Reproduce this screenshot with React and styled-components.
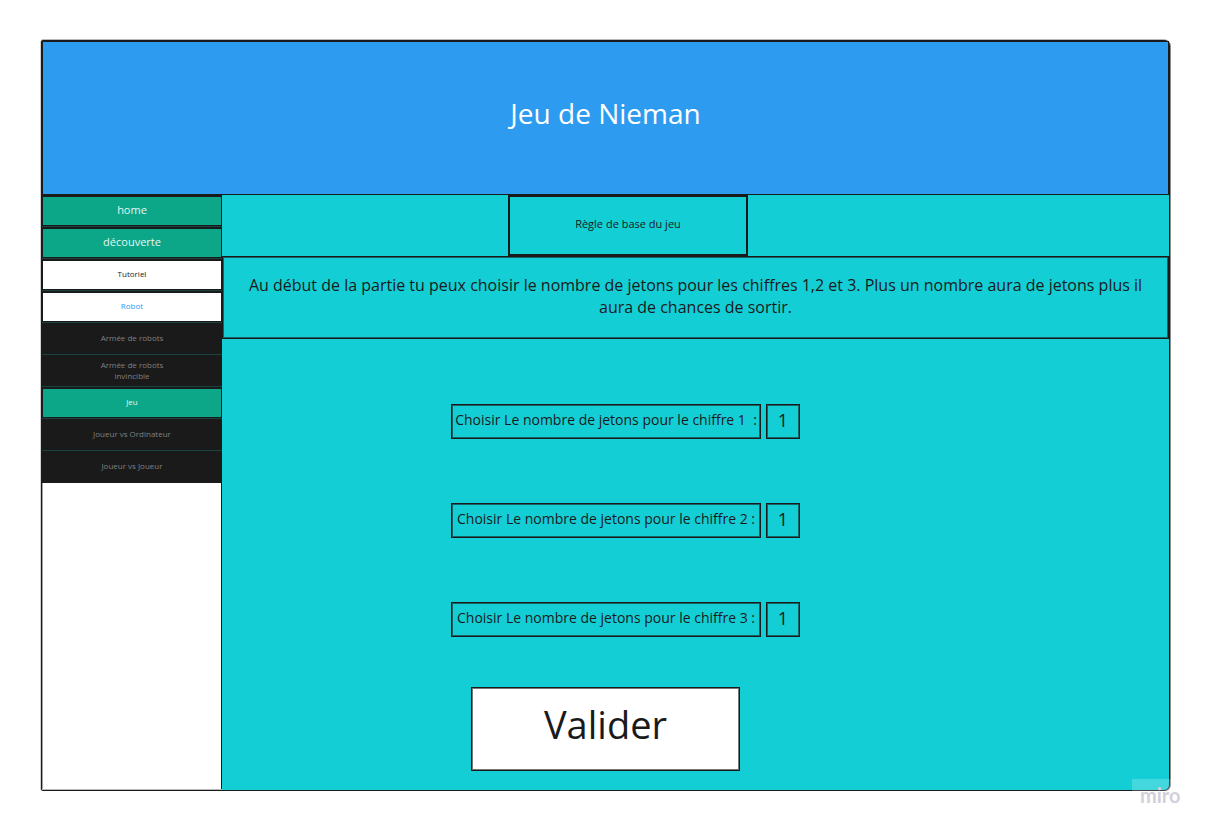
import React from "react";
import styled, { createGlobalStyle } from "styled-components";

const INK = "#1a1a1a";
const CYAN = "#14ced6";
const GREEN = "#0ca789";
const BLUE = "#2d9bf0";

const GlobalStyle = createGlobalStyle`
  *, *::before, *::after { box-sizing: border-box; }
  body {
    margin: 0;
    background: #ffffff;
    color: ${INK};
    font-family: "Open Sans", "Noto Sans", sans-serif;
  }
`;

const Page = styled.div`
  position: relative;
  display: flex;
  min-height: 100vh;
  padding: 40px 37px 37px 41px;
`;

const Frame = styled.div`
  flex: 1;
  display: flex;
  flex-direction: column;
  border: 1px solid ${INK};
  border-radius: 2px 6px 6px 2px;
  box-shadow: 1px 0 rgba(26, 26, 26, 0.5), -1px 0 rgba(26, 26, 26, 0.2),
    0 -1px rgba(26, 26, 26, 0.3);
  background: ${CYAN};
`;

const Header = styled.header`
  display: flex;
  justify-content: center;
  height: 154px;
  padding-top: 52px;
  border: 1px solid ${INK};
  background: ${BLUE};
`;

const Title = styled.h1`
  margin: 0;
  font-size: 28px;
  font-weight: 400;
  line-height: 38px;
  color: #ffffff;
`;

const Body = styled.div`
  flex: 1;
  display: grid;
  grid-template-columns: 180px 1fr;
`;

const Sidebar = styled.nav`
  display: flex;
  flex-direction: column;
  background: #ffffff;
  border-bottom: 1px solid rgba(26, 26, 26, 0.3);
  box-shadow: inset -1px 0 ${INK}, inset 1px 0 rgba(26, 26, 26, 0.4);
`;

const tones = {
  green: { background: GREEN, color: "#e6f5f2" },
  tutorial: { background: "#ffffff", color: INK },
  robot: { background: "#ffffff", color: BLUE },
  locked: { background: INK, color: "#808080" },
};

const NavItem = styled.a`
  display: flex;
  align-items: center;
  justify-content: center;
  height: 32px;
  padding: 0 48px 3px;
  border: solid ${INK};
  border-width: 2px 1px;
  background: ${(p) => tones[p.$tone].background};
  color: ${(p) => tones[p.$tone].color};
  font-size: ${(p) => (p.$large ? 11 : 8)}px;
  line-height: 11px;
  text-align: center;
  text-decoration: none;

  & + & {
    box-shadow: 0 -1px #194240;
  }

  &:last-child {
    box-shadow: 0 -1px #194240, 0 2px ${INK};
  }
`;

const Main = styled.main`
  display: flex;
  flex-direction: column;
`;

const box = `
  border: 1px solid ${INK};
  box-shadow: inset 0 0 0 1px rgba(26, 26, 26, 0.6);
`;

const RuleRow = styled.div`
  display: flex;
  justify-content: center;
  padding-right: 135px;
`;

const RuleTitle = styled.h2`
  width: 240px;
  height: 61px;
  margin: 0;
  padding-top: 19px;
  border: 2px solid ${INK};
  font-size: 11px;
  font-weight: 400;
  line-height: 16px;
  text-align: center;
`;

const Intro = styled.p`
  margin: 0;
  padding: 17px 12px 20px;
  ${box}
  font-size: 16px;
  line-height: 22px;
  text-align: center;
`;

const Form = styled.form`
  display: flex;
  flex-direction: column;
  padding: 65px 0 18px;
`;

const Fields = styled.div`
  display: flex;
  flex-direction: column;
  align-items: center;
  gap: 64px;
  padding-right: 140px;
`;

const Field = styled.div`
  display: flex;
  gap: 5px;
`;

const Label = styled.label`
  display: flex;
  justify-content: center;
  width: 310px;
  height: 35px;
  padding-top: 5px;
  ${box}
  font-size: 14px;
  line-height: 20px;
  white-space: pre;
`;

const NumberInput = styled.input`
  width: 34px;
  height: 35px;
  padding: 0 0 4px;
  ${box}
  border-radius: 0;
  background: transparent;
  color: ${INK};
  font-family: inherit;
  font-size: 18px;
  text-align: center;
`;

const Actions = styled.div`
  display: flex;
  justify-content: center;
  margin-top: 50px;
  padding-right: 180px;
`;

const SubmitButton = styled.button`
  width: 269px;
  height: 84px;
  padding: 0 0 10px;
  ${box}
  background: #ffffff;
  color: ${INK};
  font-family: inherit;
  font-size: 38px;
  line-height: 52px;
`;

const Watermark = styled.div`
  position: absolute;
  right: 19px;
  bottom: 19px;
  width: 56px;
  height: 30px;
  padding: 6px 8px 0;
  background: rgba(255, 255, 255, 0.2);
  color: #d2d0da;
  font-family: Lato, sans-serif;
  font-size: 20px;
  font-weight: 700;
  line-height: 20px;
`;

const navItems = [
  { label: "home", tone: "green", large: true },
  { label: "découverte", tone: "green", large: true },
  { label: "Tutoriel", tone: "tutorial" },
  { label: "Robot", tone: "robot" },
  { label: "Armée de robots", tone: "locked" },
  { label: "Armée de robots invincible", tone: "locked" },
  { label: "Jeu", tone: "green" },
  { label: "Joueur vs Ordinateur", tone: "locked" },
  { label: "Joueur vs Joueur", tone: "locked" },
];

const fields = [
  { id: "chiffre-1", label: "Choisir Le nombre de jetons pour le chiffre 1  :" },
  { id: "chiffre-2", label: "Choisir Le nombre de jetons pour le chiffre 2 :" },
  { id: "chiffre-3", label: "Choisir Le nombre de jetons pour le chiffre 3 :" },
];

export default function App() {
  return (
    <Page>
      <GlobalStyle />
      <Frame>
        <Header>
          <Title>Jeu de Nieman</Title>
        </Header>
        <Body>
          <Sidebar>
            {navItems.map((item) => (
              <NavItem key={item.label} href="#" $tone={item.tone} $large={item.large}>
                {item.label}
              </NavItem>
            ))}
          </Sidebar>
          <Main>
            <RuleRow>
              <RuleTitle>Règle de base du jeu</RuleTitle>
            </RuleRow>
            <Intro>
              Au début de la partie tu peux choisir le nombre de jetons pour les chiffres 1,2 et 3.
              Plus un nombre aura de jetons plus il aura de chances de sortir.
            </Intro>
            <Form onSubmit={(e) => e.preventDefault()}>
              <Fields>
                {fields.map((field) => (
                  <Field key={field.id}>
                    <Label htmlFor={field.id}>{field.label}</Label>
                    <NumberInput id={field.id} inputMode="numeric" defaultValue="1" />
                  </Field>
                ))}
              </Fields>
              <Actions>
                <SubmitButton type="submit">Valider</SubmitButton>
              </Actions>
            </Form>
          </Main>
        </Body>
      </Frame>
      <Watermark>miro</Watermark>
    </Page>
  );
}
